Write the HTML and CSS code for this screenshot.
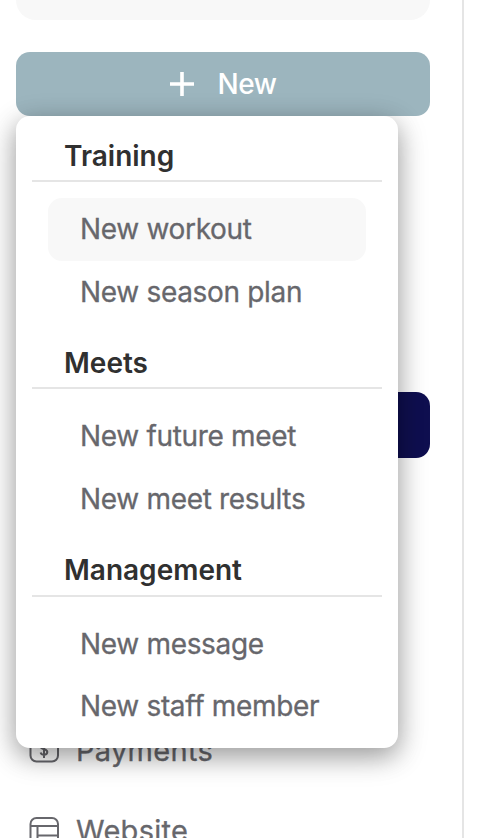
FILE: index.html
```
<!DOCTYPE html>
<html lang="en">
<head>
    <meta charset="UTF-8">
    <title>Team dashboard</title>
    <link rel="stylesheet" href="styles.css">
</head>
<body>
    <aside class="sidebar">
        <div class="team-card"></div>

        <div class="new-wrap">
            <button class="btn-new">
                <svg width="24" height="24" viewBox="0 0 24 24" fill="none" stroke="currentColor" stroke-width="3.6">
                    <path d="M12 0v24M0 12h24"/>
                </svg>
                <span>New</span>
            </button>

            <div class="menu">
                <div class="menu-section">
                    <h3>Training</h3>
                    <a class="menu-item active">New workout</a>
                    <a class="menu-item">New season plan</a>
                </div>
                <div class="menu-section">
                    <h3>Meets</h3>
                    <a class="menu-item">New future meet</a>
                    <a class="menu-item">New meet results</a>
                </div>
                <div class="menu-section">
                    <h3>Management</h3>
                    <a class="menu-item">New message</a>
                    <a class="menu-item">New staff member</a>
                </div>
            </div>
        </div>

        <nav class="nav">
            <div class="nav-current"></div>
            <div class="nav-links">
                <a class="nav-item">
                    <svg width="32" height="32" viewBox="0 0 32 32" fill="none" stroke="currentColor" stroke-width="2">
                        <rect x="2.500" y="2" width="27.500" height="25.500" rx="6"/>
                        <path d="M19.300 12c-.5-1.500-1.800-2.200-3.300-2.200-2 0-3.300 1-3.300 2.700 0 3.800 6.600 1.700 6.600 5.500 0 1.700-1.400 2.700-3.300 2.700-1.800 0-3-.8-3.400-2.300M16 7v17"/>
                    </svg>
                    <span>Payments</span>
                </a>
                <a class="nav-item">
                    <svg width="32" height="32" viewBox="0 0 32 32" fill="none" stroke="currentColor" stroke-width="2">
                        <rect x="2.500" y="4" width="27.500" height="27" rx="6"/>
                        <path d="M2.500 12h27.500M9.500 12V31M9.500 21.500H30"/>
                    </svg>
                    <span>Website</span>
                </a>
            </div>
        </nav>
    </aside>
</body>
</html>
```
FILE: styles.css
```
* {
    box-sizing: border-box;
}
body {
    margin: 0;
    height: 838px;
    overflow: hidden;
    background: #fff;
    font-family: Inter, "Liberation Sans", sans-serif;
    font-size: 28px;
    color: #67676c;
}
.sidebar {
    width: 464px;
    height: 838px;
    padding: 0 32px 0 16px;
    border-right: 2px solid #e5e5e5;
    overflow: hidden;
}
.team-card {
    height: 20px;
    border-radius: 0 0 20px 20px;
    background: #f8f8f8;
}

/* New button and its dropdown */
.new-wrap {
    position: relative;
    margin-top: 32px;
}
.btn-new {
    display: flex;
    align-items: center;
    justify-content: center;
    gap: 24px;
    width: 100%;
    height: 64px;
    padding: 0;
    border: 0;
    border-radius: 14px;
    background: #9cb5be;
    color: #fff;
    font: 500 28px Inter, "Liberation Sans", sans-serif;
    letter-spacing: -.5px;
}
.menu {
    position: absolute;
    top: 64px;
    left: 0;
    z-index: 10;
    width: 382px;
    height: 632px;
    padding: 0 16px;
    border-radius: 14px;
    background: #fff;
    box-shadow: 0 8px 32px rgba(0, 0, 0, .2), 0 8px 24px rgba(0, 0, 0, .25);
}
.menu-section {
    height: 207.2px;
}
.menu-section h3 {
    height: 66.2px;
    margin: 0 0 16px;
    padding: 14px 32px 0;
    border-bottom: 2px solid #e5e5e5;
    color: #303030;
    font-size: 28px;
    font-weight: 600;
    line-height: 52px;
}
.menu-item {
    display: block;
    height: 62.8px;
    margin: 0 16px;
    padding: 0 32px;
    border-radius: 14px;
    line-height: 62.8px;
    letter-spacing: -.32px;
    -webkit-text-stroke: .3px;
}
.menu-item.active {
    background: #f8f8f8;
}

.nav {
    margin-top: 276px;
}
.nav-current {
    height: 66px;
    border-radius: 14px;
    background: #0f0f50;
}
.nav-links {
    padding: 252px 12px 0;
}
.nav-item {
    display: flex;
    align-items: center;
    gap: 16px;
    height: 80px;
    font-size: 29px;
    letter-spacing: .3px;
    -webkit-text-stroke: .3px;
}
```
